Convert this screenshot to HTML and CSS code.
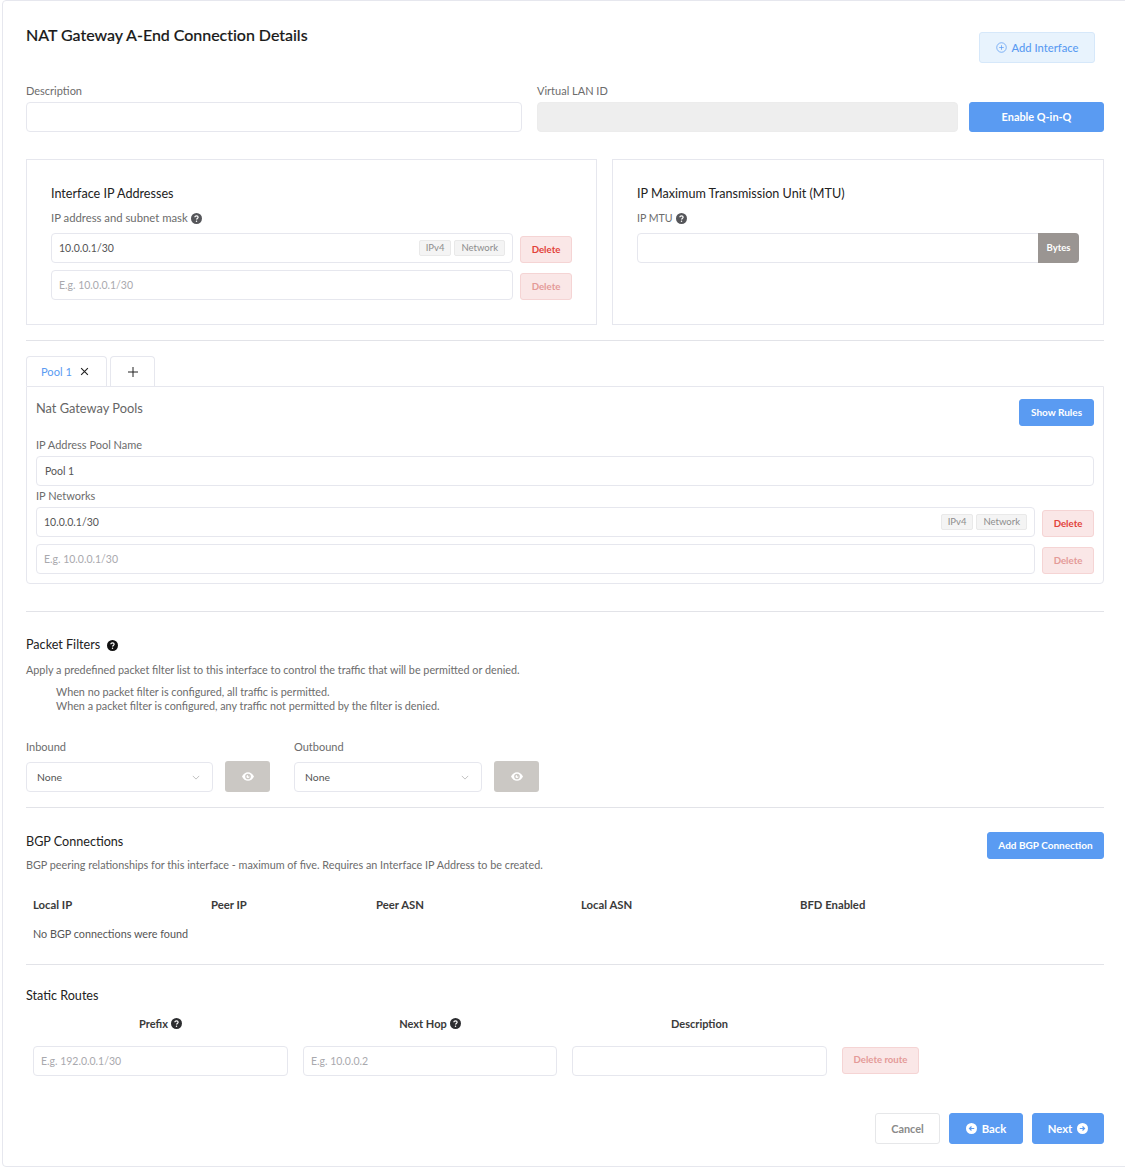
FILE: index.html
```html
<!DOCTYPE html>
<html lang="en">
<head>
<meta charset="utf-8">
<title>NAT Gateway A-End Connection Details</title>
<link rel="stylesheet" href="styles.css">
</head>
<body>
<svg class="defs" width="0" height="0" aria-hidden="true">
  <symbol id="q" viewBox="0 0 12 12"><circle cx="6" cy="6" r="6" fill="currentColor"/><path d="M4.2 4.700c0-1 .8-1.600 1.800-1.600s1.800.6 1.800 1.500c0 1.300-1.800 1.300-1.800 2.600" fill="none" stroke="#fff" stroke-width="1.300"/><circle cx="6" cy="9" r=".8" fill="#fff"/></symbol>
  <symbol id="eye" viewBox="0 0 14 10"><path d="M7 0C4 0 1.500 1.900 0 5c1.500 3.100 4 5 7 5s5.500-1.900 7-5c-1.500-3.100-4-5-7-5zm0 8.300A3.300 3.300 0 1 1 7 1.700a3.300 3.300 0 0 1 0 6.600z" fill="currentColor"/><path d="M7 3.200A1.800 1.800 0 1 0 8.800 5H7z" fill="currentColor"/></symbol>
  <symbol id="chev" viewBox="0 0 10 6"><path d="M1 1l4 4 4-4" fill="none" stroke="currentColor" stroke-width=".9"/></symbol>
</svg>
<main class="card">
  <header class="head">
    <h1 class="title">NAT Gateway A-End Connection Details</h1>
    <button class="btn btn-add"><svg class="add-icon" viewBox="0 0 12 12"><circle cx="6" cy="6" r="5.200" fill="none" stroke="currentColor" stroke-width=".8"/><path d="M6 3.500v5M3.500 6h5" stroke="currentColor" stroke-width=".8"/></svg>Add Interface</button>
  </header>

  <section class="top-row">
    <div class="col-desc">
      <label class="label">Description</label>
      <div class="field"><input class="inp" type="text"></div>
    </div>
    <div class="col-vlan">
      <label class="label">Virtual LAN ID</label>
      <div class="field field-off"><input class="inp" type="text" disabled></div>
    </div>
    <button class="btn btn-blue btn-qinq">Enable Q-in-Q</button>
  </section>

  <section class="panels">
    <div class="panel panel-ip">
      <h3 class="h3">Interface IP Addresses</h3>
      <div class="label label-q">IP address and subnet mask <svg class="q"><use href="#q"/></svg></div>
      <div class="ip-row">
        <div class="field grow"><input class="inp" type="text" value="10.0.0.1/30"><span class="tag">IPv4</span><span class="tag">Network</span></div>
        <button class="btn btn-del">Delete</button>
      </div>
      <div class="ip-row">
        <div class="field grow"><input class="inp" type="text" placeholder="E.g. 10.0.0.1/30"></div>
        <button class="btn btn-del off">Delete</button>
      </div>
    </div>
    <div class="panel panel-mtu">
      <h3 class="h3">IP Maximum Transmission Unit (MTU)</h3>
      <div class="label label-q">IP MTU <svg class="q"><use href="#q"/></svg></div>
      <div class="field field-mtu"><input class="inp" type="text"><span class="addon">Bytes</span></div>
    </div>
  </section>

  <hr class="rule rule-a">

  <nav class="tabs">
    <div class="tab tab-on"><span class="tab-name">Pool 1</span><svg class="tab-x" viewBox="0 0 8 8"><path d="M1 1l6 6M7 1L1 7" stroke="currentColor" stroke-width="1"/></svg></div>
    <div class="tab tab-plus"><svg class="tab-p" viewBox="0 0 10 10"><path d="M5 0v10M0 5h10" stroke="currentColor" stroke-width="1"/></svg></div>
  </nav>
  <section class="pool">
    <div class="pool-head">
      <div class="pool-title">Nat Gateway Pools</div>
      <button class="btn btn-blue btn-rules">Show Rules</button>
    </div>
    <label class="label label-pool">IP Address Pool Name</label>
    <div class="field"><input class="inp inp-pool" type="text" value="Pool 1"></div>
    <label class="label label-net">IP Networks</label>
    <div class="ip-row first">
      <div class="field grow"><input class="inp" type="text" value="10.0.0.1/30"><span class="tag">IPv4</span><span class="tag">Network</span></div>
      <button class="btn btn-del">Delete</button>
    </div>
    <div class="ip-row">
      <div class="field grow"><input class="inp" type="text" placeholder="E.g. 10.0.0.1/30"></div>
      <button class="btn btn-del off">Delete</button>
    </div>
  </section>

  <hr class="rule rule-b">

  <section>
    <h3 class="h3 h3-pf">Packet Filters <svg class="q q-dark"><use href="#q"/></svg></h3>
    <p class="txt txt-a">Apply a predefined packet filter list to this interface to control the traffic that will be permitted or denied.</p>
    <p class="txt txt-b">When no packet filter is configured, all traffic is permitted.<br>When a packet filter is configured, any traffic not permitted by the filter is denied.</p>
    <div class="filters">
      <div class="filter">
        <label class="label label-f">Inbound</label>
        <div class="filter-row">
          <div class="select">None<svg class="chev"><use href="#chev"/></svg></div>
          <button class="btn btn-eye"><svg class="eye"><use href="#eye"/></svg></button>
        </div>
      </div>
      <div class="filter">
        <label class="label label-f">Outbound</label>
        <div class="filter-row">
          <div class="select">None<svg class="chev"><use href="#chev"/></svg></div>
          <button class="btn btn-eye"><svg class="eye"><use href="#eye"/></svg></button>
        </div>
      </div>
    </div>
  </section>

  <hr class="rule rule-c">

  <section>
    <div class="bgp-head">
      <div>
        <h3 class="h3">BGP Connections</h3>
        <p class="txt txt-c">BGP peering relationships for this interface - maximum of five. Requires an Interface IP Address to be created.</p>
      </div>
      <button class="btn btn-blue btn-bgp">Add BGP Connection</button>
    </div>
    <div class="bgp-cols">
      <span>Local IP</span><span>Peer IP</span><span>Peer ASN</span><span>Local ASN</span><span>BFD Enabled</span>
    </div>
    <p class="txt txt-none">No BGP connections were found</p>
  </section>

  <hr class="rule rule-d">

  <section>
    <h3 class="h3 h3-sr">Static Routes</h3>
    <div class="routes">
      <div class="route-h">Prefix <svg class="q q-mid"><use href="#q"/></svg></div>
      <div class="route-h">Next Hop <svg class="q q-mid"><use href="#q"/></svg></div>
      <div class="route-h">Description</div>
      <div></div>
      <div class="field"><input class="inp" type="text" placeholder="E.g. 192.0.0.1/30"></div>
      <div class="field"><input class="inp" type="text" placeholder="E.g. 10.0.0.2"></div>
      <div class="field"><input class="inp" type="text"></div>
      <button class="btn btn-del off btn-route">Delete route</button>
    </div>
  </section>

  <footer class="foot">
    <button class="btn btn-cancel">Cancel</button>
    <button class="btn btn-blue btn-nav btn-back"><svg class="nav-i" viewBox="0 0 12 12"><circle cx="6" cy="6" r="6" fill="#fff"/><path d="M9 6H4.500M6 3.800L3.800 6 6 8.200" fill="none" stroke="#5a9bf2" stroke-width="1.300"/></svg>Back</button>
    <button class="btn btn-blue btn-nav btn-next">Next<svg class="nav-i" viewBox="0 0 12 12"><circle cx="6" cy="6" r="6" fill="#fff"/><path d="M3 6h4.500M6 3.800L8.200 6 6 8.200" fill="none" stroke="#5a9bf2" stroke-width="1.300"/></svg></button>
  </footer>
</main>
</body>
</html>
```

FILE: styles.css
```css
* { box-sizing: border-box; }
html, body { margin: 0; padding: 0; background: #fff; }
body { font-family: "Lato", "Noto Sans", sans-serif; color: #333; overflow-x: hidden; }
.defs { position: absolute; }
.card { width: 1140px; height: 1167px; margin-left: 2px; padding: 21px 36px 0 23px; background: #fff; border: 1px solid #e6e7ee; border-radius: 4px; }
h1, h3, p { margin: 0; font-weight: 400; }
button { font-family: inherit; cursor: pointer; }

.head { display: flex; justify-content: space-between; align-items: flex-start; }
.title { font-size: 16px; line-height: 26px; color: #1a1a1a; font-weight: 500; letter-spacing: -.03px; -webkit-text-stroke: .15px #1a1a1a; }
.btn { display: flex; align-items: center; justify-content: center; border: 1px solid transparent; border-radius: 3px; padding: 0 0 1px; font-size: 11px; font-weight: 700; }
.btn-add { width: 116px; height: 31px; margin-top: 10px; margin-right: 10px; background: #e8f3fd; border-color: #d6e8fa; color: #5a9bf2; font-weight: 500; font-size: 11.200px; }
.add-icon { width: 11px; height: 11px; margin-right: 5px; }
.btn-blue { background: #5a9bf2; color: #fff; border-color: #5a9bf2; }

.label { display: block; height: 14px; font-size: 11px; line-height: 14px; color: #6c6c6c; }
.label-q { display: flex; align-items: center; gap: 3px; margin-top: 8px; margin-bottom: 8px; font-size: 11.300px; }
.panel-mtu .label-q { font-size: 10.600px; }
.q { width: 11px; height: 11px; color: #55565a; flex: none; }
.q-dark { color: #111; width: 11px; height: 11px; margin-left: 4px; }
.q-mid { color: #2c2d30; width: 11px; height: 11px; }

.field { display: flex; align-items: center; height: 30px; background: #fff; border: 1px solid #e6e7ee; border-radius: 4px; }
.field-off { background: #eeeeee; border-color: #ececec; }
.inp { flex: 1; min-width: 0; height: 100%; border: 0; outline: 0; background: transparent; padding: 0 7px; font: 10.500px "Lato", "Noto Sans", sans-serif; color: #555; }
.inp::placeholder { color: #a9a9ae; opacity: 1; }
.inp-pool { padding: 0 8px; }
.grow { flex: 1; min-width: 0; }

.top-row { display: flex; align-items: flex-end; margin-top: 21px; }
.top-row .label { margin-bottom: 4px; }
.col-desc { width: 496px; }
.col-vlan { width: 421px; margin-left: 15px; }
.btn-qinq { width: 135px; height: 30px; margin-left: 11px; font-size: 10.900px; }

.panels { display: flex; gap: 15px; margin-top: 27px; }
.panel { height: 166px; padding: 23px 24px 0; border: 1px solid #e6e7ee; }
.panel-ip { width: 571px; }
.panel-mtu { width: 492px; }
.h3 { height: 20px; font-size: 12.600px; line-height: 22px; color: #222; }
.ip-row { display: flex; align-items: flex-end; gap: 7px; margin-top: 7px; }
.ip-row.first { margin-top: 0; }
.label-q + .ip-row { margin-top: 0; }
.tag { flex: none; height: 16px; margin-right: 3px; padding: 0 6px; background: #f4f4f4; border: 1px solid #e9e9e9; border-radius: 2px; font-size: 9.500px; line-height: 14px; color: #8d8d8d; }
.tag:last-child { margin-right: 7px; }
.btn-del { flex: none; width: 52px; height: 27px; padding-bottom: 2px; background: #fae7e7; border-color: #f5d4d4; color: #e2423a; font-size: 9.700px; }
.btn-del.off { color: #e49a98; }
.field-mtu { width: 442px; }
.addon { flex: none; width: 41px; height: 30px; margin: -1px; background: #9a9592; color: #fff; border-radius: 0 4px 4px 0; font-size: 9.500px; line-height: 30px; text-align: center; font-weight: 700; }

.rule { margin: 0; width: 1078px; height: 1px; border: 0; background: #e2e3e8; }
.rule-a { margin-top: 15px; }
.rule-b { margin-top: 27px; }
.rule-c { margin-top: 15px; }
.rule-d { margin-top: 23px; }

.tabs { display: flex; gap: 3px; margin-top: 15px; height: 30px; width: 1078px; }
.tab { display: flex; align-items: center; height: 30px; border: 1px solid #e6e7ee; border-bottom: 0; border-radius: 4px 4px 0 0; background: #fff; }
.tab-on { width: 81px; padding-left: 14px; }
.tab-name { font-size: 11.100px; color: #5a9bf2; }
.tab-x { width: 9px; height: 9px; margin-left: 8px; color: #222; }
.tab-plus { width: 45px; justify-content: center; }
.tab-p { width: 10px; height: 10px; color: #222; }

.pool { width: 1078px; height: 198px; padding: 12px 9px 9px; border: 1px solid #e6e7ee; border-radius: 0 0 4px 4px; }
.pool-head { display: flex; justify-content: space-between; align-items: flex-start; }
.pool-title { font-size: 12.800px; line-height: 18px; color: #666; }
.btn-rules { width: 75px; height: 27px; font-size: 10px; }
.label-pool { margin-top: 12px; margin-bottom: 4px; }
.label-net { margin-top: 3px; margin-bottom: 4px; }

.h3-pf { display: flex; align-items: center; margin-top: 23px; }
.h3-pf .q { margin-left: 7px; }
.txt { font-size: 10.800px; line-height: 14px; color: #6c6c6c; }
.txt-a { margin-top: 8px; }
.txt-b { margin-top: 8px; padding-left: 30px; }
.filters { display: flex; margin-top: 27px; }
.filter { width: 268px; }
.filter + .filter .select { width: 188px; }
.label-f { margin-bottom: 7px; }
.filter-row { display: flex; align-items: flex-end; gap: 12px; }
.select { display: flex; align-items: center; justify-content: space-between; width: 187px; height: 30px; padding: 0 12px 0 10px; background: #fff; border: 1px solid #e6e7ee; border-radius: 4px; font-size: 10.400px; color: #555; }
.chev { width: 8px; height: 5px; color: #aaa; }
.btn-eye { width: 45px; height: 31px; background: #cbc8c4; border-radius: 3px; color: #fff; }
.eye { width: 12px; height: 9px; }

.bgp-head { display: flex; justify-content: space-between; align-items: flex-start; width: 1078px; margin-top: 23px; }
.txt-c { margin-top: 7px; }
.btn-bgp { width: 117px; height: 27px; margin-top: 1px; font-size: 10px; }
.bgp-cols { display: grid; grid-template-columns: 178px 165px 205px 219px auto; margin-top: 26px; padding-left: 7px; font-size: 11.300px; line-height: 14px; font-weight: 700; color: #3a3a3a; }
.txt-none { margin-top: 15px; padding-left: 7px; color: #555; }

.h3-sr { margin-top: 20px; }
.routes { display: grid; grid-template-columns: 255px 254px 255px auto; column-gap: 15px; row-gap: 16px; align-items: center; justify-items: stretch; margin-top: 11px; padding-left: 7px; }
.route-h { display: flex; align-items: center; justify-content: center; gap: 3px; height: 14px; font-size: 11px; font-weight: 700; color: #3a3a3a; }
.btn-route { width: 77px; justify-self: start; align-self: start; margin-top: 1px; font-size: 9.600px; }

.foot { display: flex; justify-content: flex-end; gap: 9px; width: 1078px; margin-top: 37px; }
.foot .btn { height: 31px; font-size: 11.300px; }
.foot .btn-cancel { width: 65px; background: #fff; border-color: #e6e7e9; color: #8a8a8a; font-size: 10.900px; }
.btn-back { width: 74px; }
.btn-next { width: 72px; }
.nav-i { width: 11px; height: 11px; }
.btn-back .nav-i { margin-right: 5px; }
.btn-next .nav-i { margin-left: 5px; }
```
